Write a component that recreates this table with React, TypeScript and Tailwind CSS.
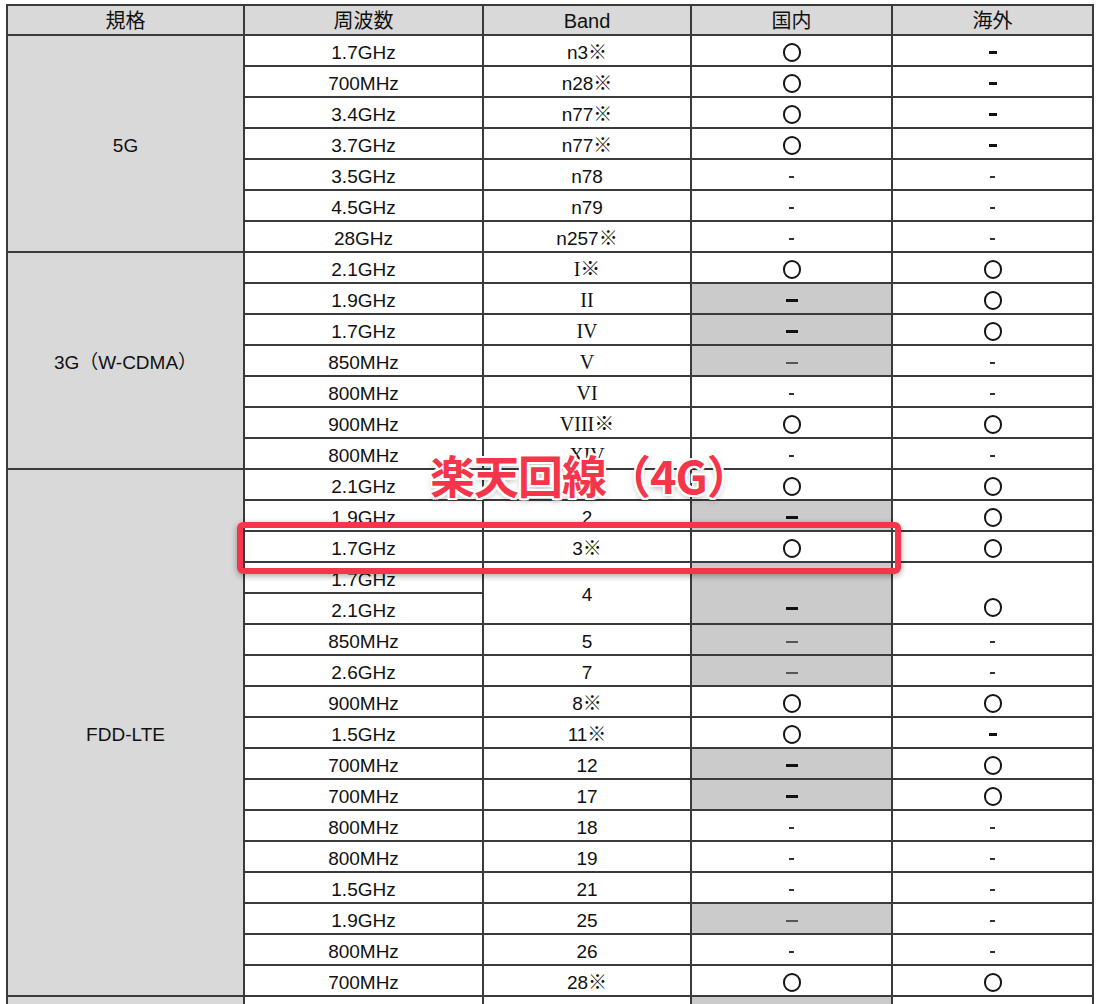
import React from "react";

type Mark = "o" | "d" | "D" | "g" | "gl" | "";
type Row = { f: string; b?: string; serif?: boolean; dom?: Mark; ovs?: Mark; span?: boolean; domGray?: boolean };

const fontSans = "font-['Liberation_Sans','Noto_Sans_CJK_JP',sans-serif]";

function MarkView({ m }: { m: Mark }) {
  if (m === "o") return <span className="mt-[3px] block h-[19px] w-[18px] rounded-full border-[2px] border-[#151515]" />;
  if (m === "D") return <span className="mt-[4px] block h-[3px] w-[8px] bg-[#111]" />;
  if (m === "d") return <span className="mt-[4px] block h-[2px] w-[5px] bg-[#333]" />;
  if (m === "g") return <span className="mt-[4px] block h-[3px] w-[12px] bg-[#111]" />;
  if (m === "gl") return <span className="mt-[4px] block h-[2px] w-[12px] bg-[#555]" />;
  return null;
}

const g5: Row[] = [
  { f: "1.7GHz", b: "n3※", dom: "o", ovs: "D" },
  { f: "700MHz", b: "n28※", dom: "o", ovs: "D" },
  { f: "3.4GHz", b: "n77※", dom: "o", ovs: "D" },
  { f: "3.7GHz", b: "n77※", dom: "o", ovs: "D" },
  { f: "3.5GHz", b: "n78", dom: "d", ovs: "d" },
  { f: "4.5GHz", b: "n79", dom: "d", ovs: "d" },
  { f: "28GHz", b: "n257※", dom: "d", ovs: "d" },
];

const g3: Row[] = [
  { f: "2.1GHz", b: "I※", serif: true, dom: "o", ovs: "o" },
  { f: "1.9GHz", b: "II", serif: true, dom: "g", ovs: "o", domGray: true },
  { f: "1.7GHz", b: "IV", serif: true, dom: "g", ovs: "o", domGray: true },
  { f: "850MHz", b: "V", serif: true, dom: "gl", ovs: "d", domGray: true },
  { f: "800MHz", b: "VI", serif: true, dom: "d", ovs: "d" },
  { f: "900MHz", b: "VIII※", serif: true, dom: "o", ovs: "o" },
  { f: "800MHz", b: "XIV", serif: true, dom: "d", ovs: "d" },
];

const lte: Row[] = [
  { f: "2.1GHz", b: "1", dom: "o", ovs: "o" },
  { f: "1.9GHz", b: "2", dom: "g", ovs: "o", domGray: true },
  { f: "1.7GHz", b: "3※", dom: "o", ovs: "o" },
  { f: "1.7GHz", b: "4", dom: "g", ovs: "o", domGray: true, span: true },
  { f: "2.1GHz" },
  { f: "850MHz", b: "5", dom: "gl", ovs: "d", domGray: true },
  { f: "2.6GHz", b: "7", dom: "gl", ovs: "d", domGray: true },
  { f: "900MHz", b: "8※", dom: "o", ovs: "o" },
  { f: "1.5GHz", b: "11※", dom: "o", ovs: "D" },
  { f: "700MHz", b: "12", dom: "g", ovs: "o", domGray: true },
  { f: "700MHz", b: "17", dom: "g", ovs: "o", domGray: true },
  { f: "800MHz", b: "18", dom: "d", ovs: "d" },
  { f: "800MHz", b: "19", dom: "d", ovs: "d" },
  { f: "1.5GHz", b: "21", dom: "d", ovs: "d" },
  { f: "1.9GHz", b: "25", dom: "gl", ovs: "d", domGray: true },
  { f: "800MHz", b: "26", dom: "d", ovs: "d" },
  { f: "700MHz", b: "28※", dom: "o", ovs: "o" },
];

const cell = "flex items-center justify-center bg-white pt-[3px] text-[19px] leading-none text-[#111]";

function Rows({ rows }: { rows: Row[] }) {
  return (
    <>
      {rows.map((r, i) => {
        const items: React.ReactNode[] = [];
        items.push(
          <div key={`f${i}`} className={cell}>
            {r.f}
          </div>
        );
        if (r.b !== undefined) {
          items.push(
            <div
              key={`b${i}`}
              className={`${cell} ${r.span ? "row-span-2" : ""} ${r.serif ? "font-['Liberation_Serif','Noto_Sans_CJK_JP',serif] text-[20px]" : ""}`}
            >
              {r.b}
            </div>
          );
          items.push(
            <div
              key={`d${i}`}
              className={`flex justify-center ${r.span ? "row-span-2 items-end pb-[13px]" : "items-center"} ${r.domGray ? "bg-[#cbcbcb]" : "bg-white"}`}
            >
              <MarkView m={r.dom ?? ""} />
            </div>
          );
          items.push(
            <div
              key={`o${i}`}
              className={`flex justify-center bg-white ${r.span ? "row-span-2 items-end pb-[6px]" : "items-center"}`}
            >
              <MarkView m={r.ovs ?? ""} />
            </div>
          );
        }
        return items;
      })}
    </>
  );
}

const head = "flex items-center justify-center bg-[#d9d9d9] pt-[2px] text-[20px] leading-none text-[#111]";
const cat = "flex items-center justify-center bg-[#d9d9d9] pt-[3px] text-[19px] leading-none text-[#111]";

export default function App() {
  return (
    <div className={`relative h-[1004px] w-[1100px] overflow-hidden bg-white ${fontSans}`}>
      <div className="ml-[6px] mt-[4px] grid w-fit grid-cols-[235px_237px_206px_199px_199px] grid-rows-[28px] auto-rows-[29px] gap-[2px] bg-[#3a3a3a] p-[2px]">
        <div className={head}>規格</div>
        <div className={head}>周波数</div>
        <div className={head}>Band</div>
        <div className={head}>国内</div>
        <div className={head}>海外</div>

        <div className={`row-span-7 ${cat}`}>5G</div>
        <Rows rows={g5} />
        <div className={`row-span-7 ${cat}`}>3G（W-CDMA）</div>
        <Rows rows={g3} />
        <div className={`row-span-17 ${cat}`}>FDD-LTE</div>
        <Rows rows={lte} />

        <div className="bg-[#d9d9d9]" />
        <div className="bg-white" />
        <div className="bg-white" />
        <div className="bg-[#cbcbcb]" />
        <div className="bg-white" />
      </div>

      <div className="absolute left-[430px] top-[452px] whitespace-nowrap font-['Noto_Sans_CJK_JP',sans-serif] text-[45px] font-bold leading-none tracking-[-1px] text-[#f5364a] [text-shadow:2px_0_0_#fff,-2px_0_0_#fff,0_2px_0_#fff,0_-2px_0_#fff,2px_2px_0_#fff,-2px_-2px_0_#fff,2px_-2px_0_#fff,-2px_2px_0_#fff,0_3px_6px_rgba(0,0,0,0.35)]">
        楽天回線（4G）
      </div>

      <div className="absolute left-[237px] top-[522px] h-[52px] w-[664px] rounded-[6px] border-[6px] border-[#f5364a] shadow-[0_2px_6px_rgba(0,0,0,0.35)]" />
    </div>
  );
}
